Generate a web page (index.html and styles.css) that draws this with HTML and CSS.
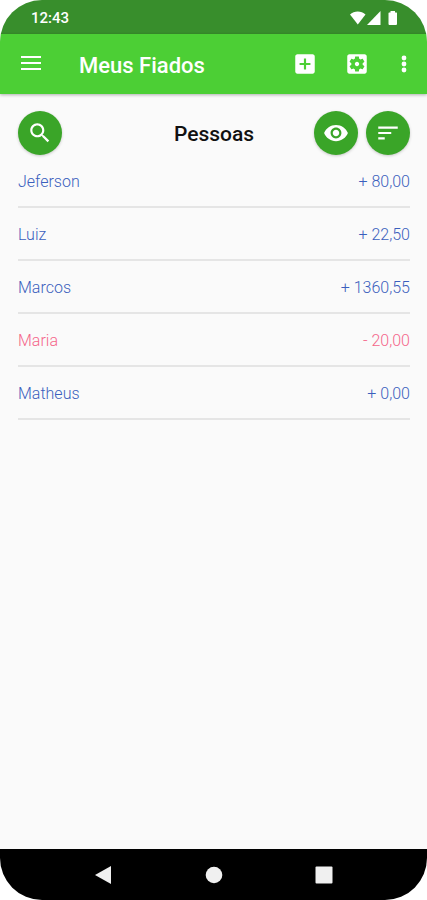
FILE: index.html
```html
<!DOCTYPE html>
<html lang="pt-BR">
<head>
<meta charset="utf-8">
<meta name="viewport" content="width=device-width, initial-scale=1">
<title>Meus Fiados</title>
<link rel="stylesheet" href="styles.css">
</head>
<body>
<div class="phone">
  <div class="status">
    <span class="clock">12:43</span>
    <svg class="signals" width="50" height="16" viewBox="0 0 50 16" aria-hidden="true">
      <path d="M1 4.500C5 .4 12.500.4 16.500 4.500L8.800 14.500Z"/>
      <path d="M31.500 1V15H18Z"/>
      <path d="M41.500 1H46V2.500H47.500Q48 2.500 48 3.200V14Q48 15 47 15H40.500Q39.500 15 39.500 14V3.200Q39.500 2.500 40.200 2.500H41.500Z"/>
    </svg>
  </div>
  <header class="appbar">
    <button class="icon" aria-label="Menu">
      <svg width="22" height="18" viewBox="0 0 22 18"><path d="M1 1h20v2H1zM1 7h20v2H1zM1 13h20v2H1z"/></svg>
    </button>
    <h1 class="brand">Meus Fiados</h1>
    <button class="icon" aria-label="Adicionar">
      <svg width="26" height="26" viewBox="0 0 24 24"><path d="M19 3H5c-1.100 0-2 .9-2 2v14c0 1.100.9 2 2 2h14c1.100 0 2-.9 2-2V5c0-1.100-.9-2-2-2zm-2 10h-4v4h-2v-4H7v-2h4V7h2v4h4v2z"/></svg>
    </button>
    <button class="icon" aria-label="Configurações">
      <svg width="26" height="26" viewBox="0 0 24 24"><path d="M12 10c-1.100 0-2 .9-2 2s.9 2 2 2 2-.9 2-2-.9-2-2-2zm7-7H5c-1.110 0-2 .9-2 2v14c0 1.100.89 2 2 2h14c1.110 0 2-.9 2-2V5c0-1.100-.89-2-2-2zm-1.750 9c0 .23-.02.46-.05.68l1.480 1.160c.13.11.17.3.08.45l-1.400 2.420c-.09.15-.27.21-.43.15l-1.740-.7c-.36.28-.76.51-1.180.69l-.26 1.850c-.03.17-.18.3-.35.3h-2.800c-.17 0-.32-.13-.35-.29l-.26-1.850c-.43-.18-.82-.41-1.180-.69l-1.740.7c-.16.06-.34 0-.43-.15l-1.400-2.420c-.09-.15-.05-.34.08-.45l1.480-1.160c-.03-.23-.05-.46-.05-.69 0-.23.02-.46.05-.68l-1.480-1.160c-.13-.11-.17-.3-.08-.45l1.400-2.420c.09-.15.27-.21.43-.15l1.740.7c.36-.28.76-.51 1.180-.69l.26-1.850c.03-.17.18-.3.35-.3h2.800c.17 0 .32.13.35.29l.26 1.850c.43.18.82.41 1.180.69l1.740-.7c.16-.06.34 0 .43.15l1.400 2.420c.09.15.05.34-.08.45l-1.480 1.160c.03.23.05.46.05.69z"/></svg>
    </button>
    <button class="icon" aria-label="Mais opções">
      <svg width="16" height="18" viewBox="0 0 16 18"><circle cx="8" cy="3" r="2.400"/><circle cx="8" cy="9" r="2.400"/><circle cx="8" cy="15" r="2.400"/></svg>
    </button>
  </header>
  <main class="content">
    <div class="toolbar">
      <div class="group">
        <button class="round" aria-label="Buscar">
          <svg width="26" height="26" viewBox="0 0 24 24"><path d="M15.500 14h-.79l-.28-.27C15.410 12.590 16 11.110 16 9.500 16 5.910 13.090 3 9.500 3S3 5.910 3 9.500 5.910 16 9.500 16c1.610 0 3.090-.59 4.230-1.570l.27.28v.79l5 4.990L20.490 19l-4.990-5zm-6 0C7.010 14 5 11.990 5 9.500S7.010 5 9.500 5 14 7.010 14 9.500 11.990 14 9.500 14z"/></svg>
        </button>
      </div>
      <h2 class="heading">Pessoas</h2>
      <div class="group end">
        <button class="round" aria-label="Mostrar valores">
          <svg width="26" height="26" viewBox="0 0 24 24"><path d="M12 4.500C7 4.500 2.730 7.610 1 12c1.730 4.390 6 7.500 11 7.500s9.270-3.110 11-7.500c-1.730-4.390-6-7.500-11-7.500zM12 17c-2.760 0-5-2.240-5-5s2.240-5 5-5 5 2.240 5 5-2.240 5-5 5zm0-8c-1.660 0-3 1.340-3 3s1.340 3 3 3 3-1.340 3-3-1.340-3-3-3z"/></svg>
        </button>
        <button class="round" aria-label="Ordenar">
          <svg width="26" height="26" viewBox="0 0 24 24"><path d="M3 18h6v-2H3v2zM3 6v2h18V6H3zm0 7h12v-2H3v2z"/></svg>
        </button>
      </div>
    </div>
    <ul class="people">
      <li class="person"><span>Jeferson</span><span>+ 80,00</span></li>
      <li class="person"><span>Luiz</span><span>+ 22,50</span></li>
      <li class="person"><span>Marcos</span><span>+ 1360,55</span></li>
      <li class="person debt"><span>Maria</span><span>- 20,00</span></li>
      <li class="person"><span>Matheus</span><span>+ 0,00</span></li>
    </ul>
  </main>
  <nav class="sysnav">
    <button class="icon" aria-label="Voltar"><svg width="18" height="18" viewBox="0 0 18 18"><path d="M16 0V18L0 9Z"/></svg></button>
    <button class="icon" aria-label="Início"><svg width="18" height="18" viewBox="0 0 18 18"><circle cx="9" cy="9" r="8.300"/></svg></button>
    <button class="icon" aria-label="Recentes"><svg width="18" height="18" viewBox="0 0 18 18"><rect x=".5" y=".5" width="17" height="17" rx="1"/></svg></button>
  </nav>
</div>
</body>
</html>
```
FILE: styles.css
```css
* {
  box-sizing: border-box;
}

body {
  margin: 0;
  background: #fff;
  font-family: Roboto, "Liberation Sans", sans-serif;
}

svg {
  display: block;
  fill: currentColor;
}

button {
  padding: 0;
  border: 0;
  background: none;
  color: inherit;
  font: inherit;
}

h1,
h2,
ul {
  margin: 0;
  padding: 0;
}

.phone {
  display: flex;
  flex-direction: column;
  min-height: 100vh;
  overflow: hidden;
  border-radius: 42px;
  background: #fafafa;
}

.status {
  display: flex;
  align-items: center;
  justify-content: space-between;
  height: 34px;
  padding: 2px 28px 0 31px;
  background: #388e2c;
  color: #fff;
}

.clock {
  font-size: 15px;
  font-weight: 500;
}

.appbar {
  display: flex;
  align-items: center;
  gap: 26px;
  height: 60px;
  padding: 0 15px 0 20px;
  background: #4ccf35;
  box-shadow: 0 1px 3px rgba(0, 0, 0, 0.3);
  color: #fff;
}

.brand {
  flex: 1;
  padding: 2px 0 0 11px;
  font-size: 22px;
  font-weight: 500;
}

.content {
  flex: 1;
  padding: 17px 17px 0 18px;
}

.toolbar {
  display: grid;
  grid-template-columns: 1fr auto 1fr;
  align-items: center;
}

.group {
  display: flex;
  gap: 8px;
}

.end {
  justify-content: flex-end;
}

.round {
  display: grid;
  place-items: center;
  width: 44px;
  height: 44px;
  border-radius: 50%;
  background: #3aa528;
  box-shadow: 0 1px 3px rgba(0, 0, 0, 0.2);
  color: #fff;
}

.heading {
  padding-top: 2px;
  color: #111;
  font-size: 21px;
  font-weight: 500;
}

.people {
  list-style: none;
}

.person {
  display: flex;
  align-items: center;
  justify-content: space-between;
  min-height: 53px;
  padding-top: 2px;
  border-bottom: 2px solid #e5e5e5;
  color: #3a5fbd;
  font-size: 16px;
  font-weight: 300;
}

.debt {
  color: #f5668a;
}

.sysnav {
  display: flex;
  align-items: center;
  justify-content: center;
  gap: 92px;
  height: 51px;
  background: #000;
  color: #f0f0f0;
}
```
